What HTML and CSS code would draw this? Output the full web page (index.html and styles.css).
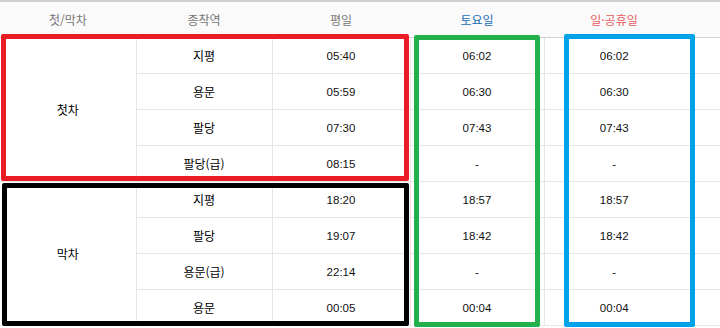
FILE: index.html
```html
<!DOCTYPE html>
<html lang="ko">
<head>
<meta charset="utf-8">
<title>첫차/막차 시간표</title>
<link rel="stylesheet" href="styles.css">
</head>
<body>
<div class="wrap">
  <table class="timetable">
    <colgroup>
      <col class="c1"><col class="c2"><col class="c3"><col class="c4"><col class="c5">
    </colgroup>
    <thead>
      <tr>
        <th>첫/막차</th>
        <th>종착역</th>
        <th>평일</th>
        <th class="sat">토요일</th>
        <th class="hol last">일·공휴일</th>
      </tr>
    </thead>
    <tbody>
      <tr><td class="kind" rowspan="4">첫차</td><td>지평</td><td class="num">05:40</td><td class="num">06:02</td><td class="num last">06:02</td></tr>
      <tr><td>용문</td><td class="num">05:59</td><td class="num">06:30</td><td class="num last">06:30</td></tr>
      <tr><td>팔당</td><td class="num">07:30</td><td class="num">07:43</td><td class="num last">07:43</td></tr>
      <tr><td>팔당(급)</td><td class="num">08:15</td><td class="num">-</td><td class="num last">-</td></tr>
      <tr><td class="kind" rowspan="4">막차</td><td>지평</td><td class="num">18:20</td><td class="num">18:57</td><td class="num last">18:57</td></tr>
      <tr><td>팔당</td><td class="num">19:07</td><td class="num">18:42</td><td class="num last">18:42</td></tr>
      <tr><td>용문(급)</td><td class="num">22:14</td><td class="num">-</td><td class="num last">-</td></tr>
      <tr><td>용문</td><td class="num">00:05</td><td class="num">00:04</td><td class="num last">00:04</td></tr>
    </tbody>
  </table>
  <div class="mark mark-red"></div>
  <div class="mark mark-black"></div>
  <div class="mark mark-green"></div>
  <div class="mark mark-blue"></div>
</div>
</body>
</html>
```
FILE: styles.css
```css
html, body {
  margin: 0;
  padding: 0;
  background: #ffffff;
}

.wrap {
  position: relative;
  width: 720px;
  height: 328px;
  overflow: hidden;
}

.timetable {
  width: 720px;
  table-layout: fixed;
  border-collapse: collapse;
  border-top: 2px solid #cfcfcf;
  font-family: "Noto Sans CJK KR", "Malgun Gothic", sans-serif;
  font-size: 12px;
  color: #000000;
}

.c1 { width: 136px; }
.c2 { width: 136px; }
.c3 { width: 138px; }
.c4 { width: 134px; }
.c5 { width: 176px; }

.timetable th {
  height: 35px;
  padding: 0;
  background: #fafafa;
  font-weight: normal;
  color: #777777;
  font-size: 12px;
  text-align: center;
  border-bottom: 1px solid #d4d4d4;
}

.timetable th.sat { color: #1a6db5; }
.timetable th.hol { color: #e85a62; }

.timetable td {
  height: 35px;
  padding: 0;
  text-align: center;
  border-bottom: 1px solid #e6e6e6;
  border-right: 1px solid #e6e6e6;
}

.timetable th.last,
.timetable td.last {
  padding-right: 36px;
  border-right: none;
}

.timetable td.num {
  font-family: "Liberation Sans", "Noto Sans CJK KR", sans-serif;
  font-size: 11.5px;
  color: #111111;
}

.mark {
  position: absolute;
  border: 5px solid;
  border-radius: 2px;
  box-sizing: border-box;
}

.mark-red {
  left: 1px; top: 34px; width: 408px; height: 147px;
  border-color: #ec1c24;
}

.mark-black {
  left: 2px; top: 183px; width: 407px; height: 143px;
  border-color: #000000;
}

.mark-green {
  left: 414px; top: 35px; width: 126px; height: 292px;
  border-color: #22b14c;
}

.mark-blue {
  left: 564px; top: 34px; width: 131px; height: 293px;
  border-color: #00a2e8;
}
```
